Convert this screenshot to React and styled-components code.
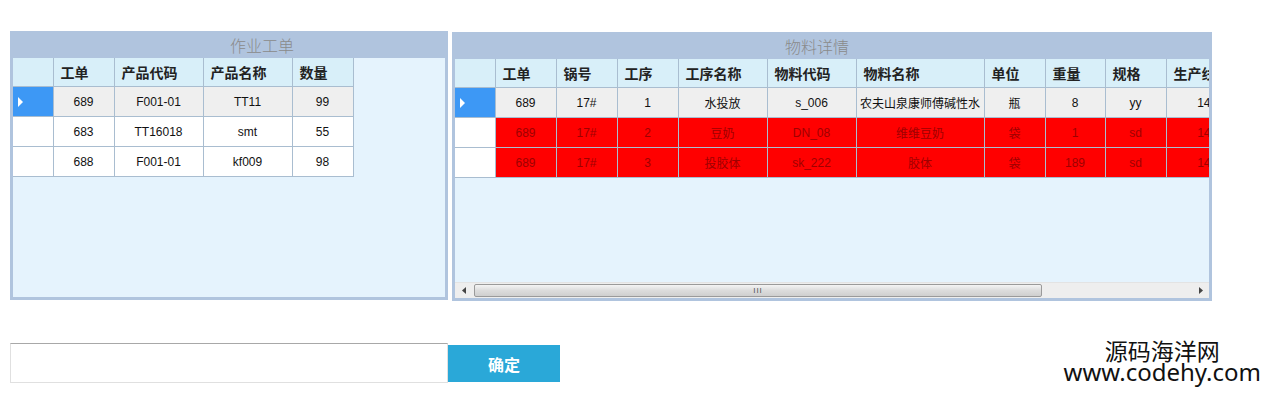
import React from "react"
import styled, { createGlobalStyle } from "styled-components"

const GlobalStyle = createGlobalStyle`
  html, body {
    margin: 0;
    padding: 0;
    background: #ffffff;
    font-family: "Liberation Sans", "Noto Sans CJK SC", sans-serif;
  }
`

const Page = styled.div`
  width: 1267px;
  height: 393px;
  box-sizing: border-box;
  padding: 31px 0 0 10px;
  overflow: hidden;
`

const PanelRow = styled.div`
  display: flex;
  align-items: flex-start;
  gap: 4px;
`

const Panel = styled.div`
  width: ${(p) => p.width}px;
  margin-top: ${(p) => p.shift || 0}px;
  box-sizing: border-box;
  display: flex;
  flex-direction: column;
  background: #b0c4de;
`

const PanelTitle = styled.div`
  height: 27px;
  box-sizing: border-box;
  padding: 2px 0 0 ${(p) => p.indent}px;
  line-height: 25px;
  font-size: 16px;
  color: #8a8a8a;
  font-family: "Noto Sans CJK SC", sans-serif;
  font-weight: 300;
`

const PanelBody = styled.div`
  margin: 0 3px 3px 3px;
  height: 239px;
  background: #e5f3fd;
  display: flex;
  flex-direction: column;
  overflow: hidden;
`

const GridArea = styled.div`
  flex: 1;
  overflow: hidden;
`

const Grid = styled.table`
  width: ${(p) => p.total}px;
  border-collapse: collapse;
  table-layout: fixed;
  font-size: 12px;
  color: #111;
`

const HeadCell = styled.th`
  height: 28px;
  padding: 0 0 0 7px;
  background: #d8eff9;
  border: 1px solid #a9bdd0;
  border-top: none;
  text-align: left;
  font-size: 14px;
  font-weight: bold;
  color: #222;
  white-space: nowrap;
  overflow: hidden;
  font-family: "Noto Sans CJK SC", sans-serif;

  &:first-child {
    border-left: none;
  }
`

const Cell = styled.td`
  height: 29px;
  padding: 0;
  border: 1px solid #a9bdd0;
  text-align: center;
  white-space: nowrap;
  overflow: hidden;
  background: ${(p) => (p.tone === "alert" ? "#ff0000" : p.tone === "current" ? "#efefef" : "#ffffff")};
  color: ${(p) => (p.tone === "alert" ? "#9e0000" : "#111")};
`

const RowHead = styled.td`
  height: 29px;
  padding: 0;
  border: 1px solid #a9bdd0;
  border-left: none;
  background: ${(p) => (p.current ? "#3d98f5" : "#ffffff")};
  position: relative;
`

const Marker = styled.span`
  position: absolute;
  left: 5px;
  top: 10px;
  width: 0;
  height: 0;
  border-top: 5px solid transparent;
  border-bottom: 5px solid transparent;
  border-left: 5px solid #ffffff;
`

const ScrollBar = styled.div`
  height: 16px;
  display: flex;
  align-items: stretch;
  background: #eeeeee;
  border-top: 1px solid #e3e3e3;
  box-sizing: border-box;
`

const ArrowButton = styled.div`
  width: 17px;
  display: flex;
  align-items: center;
  justify-content: center;
`

const Thumb = styled.div`
  width: 568px;
  margin: 1px 0 1px 2px;
  box-sizing: border-box;
  border: 1px solid #9a9a9a;
  border-radius: 2px;
  background: linear-gradient(#f4f4f4, #dcdcdc 50%, #cfcfcf);
  display: flex;
  align-items: center;
  justify-content: center;
  font-size: 8px;
  color: #555;
  letter-spacing: 1px;
  line-height: 1;
`

const Track = styled.div`
  flex: 1;
`

const BottomRow = styled.div`
  display: flex;
  align-items: flex-start;
  margin-top: 42px;
`

const TextInput = styled.input`
  width: 438px;
  height: 40px;
  box-sizing: border-box;
  margin: 0;
  border: 1px solid #e0e0e0;
  border-top-color: #a8a8a8;
  outline: none;
  padding: 0 8px;
`

const ConfirmButton = styled.button`
  width: 112px;
  height: 37px;
  margin-top: 2px;
  border: none;
  background: #2aa8d8;
  color: #ffffff;
  font-size: 16px;
  font-weight: bold;
  font-family: "Noto Sans CJK SC", sans-serif;
`

const Watermark = styled.div`
  margin-left: auto;
  margin-right: 6px;
  margin-top: -5px;
  text-align: center;
  color: #111;
`

const MarkName = styled.div`
  font-family: "Noto Sans CJK SC", sans-serif;
  font-size: 23px;
  line-height: 24px;
`

const MarkSite = styled.div`
  font-family: "Noto Sans", sans-serif;
  font-size: 24px;
  line-height: 20px;
`

const orders = [
  { id: "689", code: "F001-01", name: "TT11", qty: "99" },
  { id: "683", code: "TT16018", name: "smt", qty: "55" },
  { id: "688", code: "F001-01", name: "kf009", qty: "98" },
]

const materials = [
  ["689", "17#", "1", "水投放", "s_006", "农夫山泉康师傅碱性水", "瓶", "8", "yy", "1401"],
  ["689", "17#", "2", "豆奶", "DN_08", "维维豆奶", "袋", "1", "sd", "1401"],
  ["689", "17#", "3", "投胶体", "sk_222", "胶体", "袋", "189", "sd", "1401"],
]

const orderCols = [
  ["工单", 61],
  ["产品代码", 89],
  ["产品名称", 89],
  ["数量", 61],
]

const materialCols = [
  ["工单", 61],
  ["锅号", 61],
  ["工序", 61],
  ["工序名称", 89],
  ["物料代码", 89],
  ["物料名称", 128],
  ["单位", 61],
  ["重量", 60],
  ["规格", 61],
  ["生产线别", 89],
]

const total = (cols) => cols.reduce((s, [, w]) => s + w, 40)

function Head({ cols }) {
  return (
    <>
      <colgroup>
        <col style={{ width: 40 }} />
        {cols.map(([label, w]) => (
          <col key={label} style={{ width: w }} />
        ))}
      </colgroup>
      <thead>
        <tr>
          <HeadCell />
          {cols.map(([label]) => (
            <HeadCell key={label}>{label}</HeadCell>
          ))}
        </tr>
      </thead>
    </>
  )
}

function OrderGrid() {
  return (
    <Grid total={total(orderCols)}>
      <Head cols={orderCols} />
      <tbody>
        {orders.map((o, i) => (
          <tr key={o.id}>
            <RowHead current={i === 0}>{i === 0 && <Marker />}</RowHead>
            <Cell tone={i === 0 ? "current" : ""}>{o.id}</Cell>
            <Cell tone={i === 0 ? "current" : ""}>{o.code}</Cell>
            <Cell tone={i === 0 ? "current" : ""}>{o.name}</Cell>
            <Cell tone={i === 0 ? "current" : ""}>{o.qty}</Cell>
          </tr>
        ))}
      </tbody>
    </Grid>
  )
}

function MaterialGrid() {
  return (
    <Grid total={total(materialCols)}>
      <Head cols={materialCols} />
      <tbody>
        {materials.map((row, i) => (
          <tr key={i}>
            <RowHead current={i === 0}>{i === 0 && <Marker />}</RowHead>
            {row.map((v, j) => (
              <Cell key={j} tone={i === 0 ? "current" : "alert"}>
                {v}
              </Cell>
            ))}
          </tr>
        ))}
      </tbody>
    </Grid>
  )
}

function HScroll() {
  return (
    <ScrollBar>
      <ArrowButton>
        <svg width="4" height="7" viewBox="0 0 4 7">
          <path d="M4 0 L0 3.5 L4 7 Z" fill="#444" />
        </svg>
      </ArrowButton>
      <Thumb>III</Thumb>
      <Track />
      <ArrowButton>
        <svg width="4" height="7" viewBox="0 0 4 7">
          <path d="M0 0 L4 3.5 L0 7 Z" fill="#444" />
        </svg>
      </ArrowButton>
    </ScrollBar>
  )
}

export default function App() {
  return (
    <Page>
      <GlobalStyle />
      <PanelRow>
        <Panel width={438}>
          <PanelTitle indent={220}>作业工单</PanelTitle>
          <PanelBody>
            <GridArea>
              <OrderGrid />
            </GridArea>
          </PanelBody>
        </Panel>
        <Panel width={760} shift={1}>
          <PanelTitle indent={333}>物料详情</PanelTitle>
          <PanelBody>
            <GridArea>
              <MaterialGrid />
            </GridArea>
            <HScroll />
          </PanelBody>
        </Panel>
      </PanelRow>
      <BottomRow>
        <TextInput />
        <ConfirmButton>确定</ConfirmButton>
        <Watermark>
          <MarkName>源码海洋网</MarkName>
          <MarkSite>www.codehy.com</MarkSite>
        </Watermark>
      </BottomRow>
    </Page>
  )
}
